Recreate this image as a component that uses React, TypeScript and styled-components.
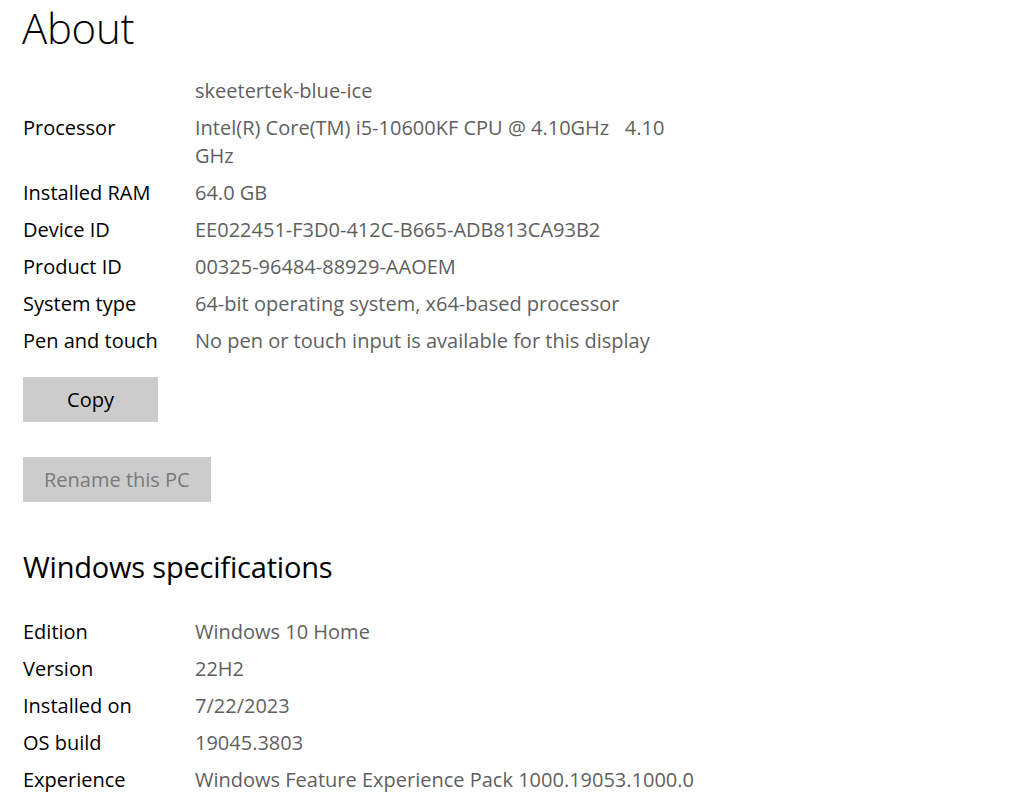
import styled, { createGlobalStyle } from "styled-components";

const GlobalStyle = createGlobalStyle`
  html, body {
    margin: 0;
    padding: 0;
    background: #ffffff;
  }
  body {
    font-family: "Open Sans", "Noto Sans", "Liberation Sans", sans-serif;
    color: #000000;
  }
`;

const Page = styled.main`
  width: 1013px;
  height: 810px;
  overflow: hidden;
  display: flex;
  flex-direction: column;
`;

const Title = styled.h1`
  margin: 0;
  padding: 2px 0 0 22px;
  font-size: 42px;
  font-weight: 300;
  line-height: 52px;
  letter-spacing: -0.3px;
`;

const Scroller = styled.section`
  flex: 1;
  overflow: hidden;
  padding: 0 0 0 23px;
`;

// value column is narrow in the device block so long CPU names wrap
const InfoTable = styled.dl<{ $top?: number; $valueWidth?: number }>`
  margin: ${(p) => p.$top ?? 0}px 0 0;
  display: grid;
  grid-template-columns: 172px ${(p) => p.$valueWidth ?? 485}px;
  row-gap: 9px;
  font-size: 20px;
  line-height: 28px;
`;

const Label = styled.dt`
  margin: 0;
  color: #000000;
`;

const Value = styled.dd`
  margin: 0;
  color: #5f5f5f;
  white-space: pre-wrap;
`;

const Buttons = styled.div`
  display: flex;
  flex-direction: column;
  align-items: flex-start;
  gap: 35px;
  margin-top: 22px;
`;

const Button = styled.button<{ $disabled?: boolean }>`
  height: 45px;
  min-width: 135px;
  padding: 0 21px;
  border: 0;
  background: #cccccc;
  font-family: inherit;
  font-size: 20px;
  color: ${(p) => (p.$disabled ? "#7a7a7a" : "#000000")};
  cursor: ${(p) => (p.$disabled ? "default" : "pointer")};
`;

const SectionTitle = styled.h2`
  margin: 47px 0 33px;
  font-size: 29px;
  font-weight: 400;
  line-height: 36px;
  letter-spacing: -0.2px;
`;

const device: [string, string][] = [
  ["Processor", "Intel(R) Core(TM) i5-10600KF CPU @ 4.10GHz   4.10 GHz"],
  ["Installed RAM", "64.0 GB"],
  ["Device ID", "EE022451-F3D0-412C-B665-ADB813CA93B2"],
  ["Product ID", "00325-96484-88929-AAOEM"],
  ["System type", "64-bit operating system, x64-based processor"],
  ["Pen and touch", "No pen or touch input is available for this display"],
];

const windows: [string, string][] = [
  ["Edition", "Windows 10 Home"],
  ["Version", "22H2"],
  ["Installed on", "7/22/2023"],
  ["OS build", "19045.3803"],
  ["Experience", "Windows Feature Experience Pack 1000.19053.1000.0"],
];

const Rows = ({ rows }: { rows: [string, string][] }) => (
  <>
    {rows.map(([k, v]) => (
      <div key={k} style={{ display: "contents" }}>
        <Label>{k}</Label>
        <Value>{v}</Value>
      </div>
    ))}
  </>
);

export default function App() {
  return (
    <Page>
      <GlobalStyle />
      <Title>About</Title>
      <Scroller>
        <InfoTable $top={23}>
          <Label />
          <Value>skeetertek-blue-ice</Value>
          <Rows rows={device} />
        </InfoTable>
        <Buttons>
          <Button>Copy</Button>
          <Button $disabled>Rename this PC</Button>
        </Buttons>
        <SectionTitle>Windows specifications</SectionTitle>
        <InfoTable $valueWidth={600}>
          <Rows rows={windows} />
        </InfoTable>
      </Scroller>
    </Page>
  );
}
